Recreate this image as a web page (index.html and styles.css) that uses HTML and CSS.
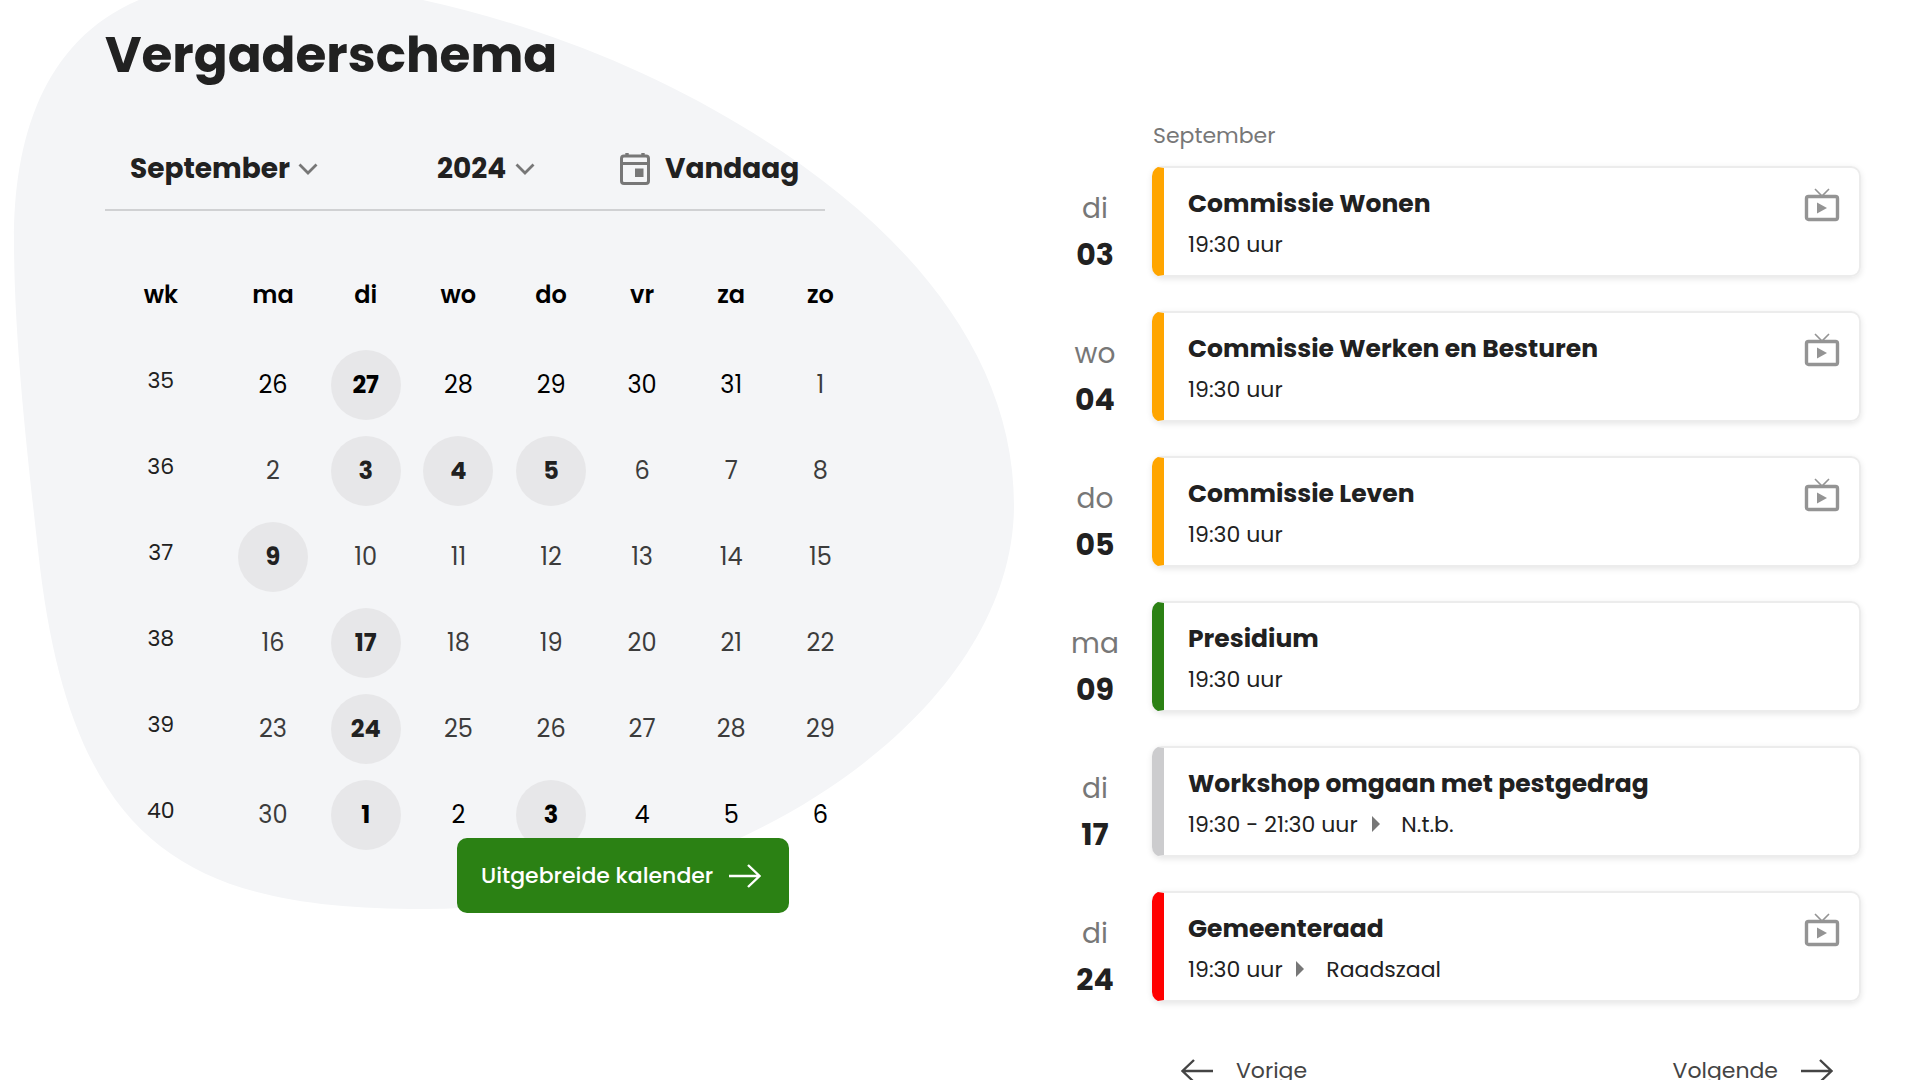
FILE: index.html
```html
<!DOCTYPE html>
<html lang="nl">
<head>
    <meta charset="UTF-8">
    <meta name="viewport" content="width=device-width, initial-scale=1.0">
    <title>Vergaderschema</title>
    <link rel="stylesheet" href="styles.css">
</head>
<body>
    <!-- shared icons -->
    <svg class="icon-defs" aria-hidden="true">
        <symbol id="icon-chevron" viewBox="0 0 20 12">
            <path d="M1.500 1.500l8.500 8.500 8.500-8.500" fill="none" stroke="currentColor" stroke-width="2.8"/>
        </symbol>
        <symbol id="icon-arrow" viewBox="0 0 32 24">
            <path d="M0 12h30M19 1l11.500 11L19 23" fill="none" stroke="currentColor" stroke-width="2.4"/>
        </symbol>
        <symbol id="icon-tv" viewBox="0 0 36 34">
            <rect x="2.500" y="8.500" width="31" height="23" rx="2" fill="none" stroke="currentColor" stroke-width="3.400"/>
            <path d="M11 1l7 7 7-7" fill="none" stroke="currentColor" stroke-width="1.600"/>
            <path d="M13 14.500l10 5.500-10 5.500z" fill="currentColor"/>
        </symbol>
        <symbol id="icon-play" viewBox="0 0 8 16">
            <path d="M0 0l8 8-8 8z" fill="currentColor"/>
        </symbol>
    </svg>

    <main class="page">
        <section class="calendar">
            <svg class="blob" viewBox="0 0 1020 910" aria-hidden="true">
                <path d="M14 240C14 112 60 -20 250 -20C400 -20 590 34 740 125C900 220 1014 350 1014 505C1014 720 720 909 423 909C190 909 70 850 38 550C28 460 14 340 14 240z"/>
            </svg>

            <h1>Vergaderschema</h1>

            <div class="toolbar">
                <label class="picker">
                    <select aria-label="Maand">
                        <option>September</option>
                    </select>
                    <svg class="chevron"><use href="#icon-chevron"/></svg>
                </label>
                <label class="picker">
                    <select aria-label="Jaar">
                        <option>2024</option>
                    </select>
                    <svg class="chevron"><use href="#icon-chevron"/></svg>
                </label>
                <button type="button" class="today">
                    <svg class="today-icon" viewBox="0 0 30 34" aria-hidden="true">
                        <rect x="1.500" y="4" width="27" height="27.500" rx="2.500" fill="none" stroke="currentColor" stroke-width="3"/>
                        <path d="M7 1v3M23 1v3" fill="none" stroke="currentColor" stroke-width="3.400"/>
                        <path d="M2 11.500h26" stroke="currentColor" stroke-width="3"/>
                        <path d="M15 16.500h8.500v8.500h-8.500z" fill="currentColor"/>
                    </svg>
                    Vandaag
                </button>
            </div>

            <table class="month">
                <thead>
                    <tr><th class="week">wk</th><th class="day">ma</th><th class="day">di</th><th class="day">wo</th><th class="day">do</th><th>vr</th><th>za</th><th>zo</th></tr>
                </thead>
                <tbody>
                    <tr><td class="week">35</td><td class="other">26</td><td class="other"><a href="#">27</a></td><td class="other">28</td><td class="other">29</td><td class="other">30</td><td class="other">31</td><td>1</td></tr>
                    <tr><td class="week">36</td><td>2</td><td><a href="#di-03">3</a></td><td><a href="#wo-04">4</a></td><td><a href="#do-05">5</a></td><td>6</td><td>7</td><td>8</td></tr>
                    <tr><td class="week">37</td><td><a href="#ma-09">9</a></td><td>10</td><td>11</td><td>12</td><td>13</td><td>14</td><td>15</td></tr>
                    <tr><td class="week">38</td><td>16</td><td><a href="#di-17">17</a></td><td>18</td><td>19</td><td>20</td><td>21</td><td>22</td></tr>
                    <tr><td class="week">39</td><td>23</td><td><a href="#di-24">24</a></td><td>25</td><td>26</td><td>27</td><td>28</td><td>29</td></tr>
                    <tr><td class="week">40</td><td>30</td><td class="other"><a href="#">1</a></td><td class="other">2</td><td class="other"><a href="#">3</a></td><td class="other">4</td><td class="other">5</td><td class="other">6</td></tr>
                </tbody>
            </table>

            <a class="full-calendar" href="#">
                Uitgebreide kalender
                <svg class="arrow"><use href="#icon-arrow"/></svg>
            </a>
        </section>

        <section class="agenda">
            <h2>September</h2>

            <ul class="meetings">
                <li id="di-03">
                    <div class="date"><span>di</span><strong>03</strong></div>
                    <article class="card commissie">
                        <div>
                            <h3><a href="#">Commissie Wonen</a></h3>
                            <p>19:30 uur</p>
                        </div>
                        <svg class="tv"><use href="#icon-tv"/></svg>
                    </article>
                </li>
                <li id="wo-04">
                    <div class="date"><span>wo</span><strong>04</strong></div>
                    <article class="card commissie">
                        <div>
                            <h3><a href="#">Commissie Werken en Besturen</a></h3>
                            <p>19:30 uur</p>
                        </div>
                        <svg class="tv"><use href="#icon-tv"/></svg>
                    </article>
                </li>
                <li id="do-05">
                    <div class="date"><span>do</span><strong>05</strong></div>
                    <article class="card commissie">
                        <div>
                            <h3><a href="#">Commissie Leven</a></h3>
                            <p>19:30 uur</p>
                        </div>
                        <svg class="tv"><use href="#icon-tv"/></svg>
                    </article>
                </li>
                <li id="ma-09">
                    <div class="date"><span>ma</span><strong>09</strong></div>
                    <article class="card presidium">
                        <div>
                            <h3><a href="#">Presidium</a></h3>
                            <p>19:30 uur</p>
                        </div>
                    </article>
                </li>
                <li id="di-17">
                    <div class="date"><span>di</span><strong>17</strong></div>
                    <article class="card workshop">
                        <div>
                            <h3><a href="#">Workshop omgaan met pestgedrag</a></h3>
                            <p>19:30 - 21:30 uur <svg class="play"><use href="#icon-play"/></svg> N.t.b.</p>
                        </div>
                    </article>
                </li>
                <li id="di-24">
                    <div class="date"><span>di</span><strong>24</strong></div>
                    <article class="card raad">
                        <div>
                            <h3><a href="#">Gemeenteraad</a></h3>
                            <p>19:30 uur <svg class="play"><use href="#icon-play"/></svg> Raadszaal</p>
                        </div>
                        <svg class="tv"><use href="#icon-tv"/></svg>
                    </article>
                </li>
            </ul>

            <nav class="pager">
                <a href="#"><svg class="arrow back"><use href="#icon-arrow"/></svg>Vorige</a>
                <a href="#">Volgende<svg class="arrow"><use href="#icon-arrow"/></svg></a>
            </nav>
        </section>
    </main>
</body>
</html>
```

FILE: styles.css
```css
* {
    box-sizing: border-box;
}

body {
    margin: 0;
    font-family: Poppins, Inter, sans-serif;
    font-size: 22px;
    line-height: 32px;
    color: #212121;
    background-color: #fff;
}

h1, h2, h3, p, ul {
    margin: 0;
    padding: 0;
}

a {
    color: inherit;
    text-decoration: none;
}

.icon-defs {
    display: none;
}

.page {
    display: grid;
    grid-template-columns: 760fr 809fr;
    gap: 187px;
    padding: 0 59px 0 105px;
}

/* Calendar */
.calendar {
    position: relative;
    z-index: 0;
    padding-top: 25px;
}

.blob {
    position: absolute;
    top: 0;
    left: -105px;
    z-index: -1;
    width: 1020px;
    height: 910px;
    fill: #f4f5f7;
}

h1 {
    font-size: 50px;
    line-height: 60px;
}

.toolbar {
    display: grid;
    grid-template-columns: 307fr 183fr 180fr;
    align-items: center;
    height: 86px;
    margin: 40px 40px 35px 0;
    padding: 3px 25px 0;
    border-bottom: 2px solid #d0d1d3;
}

.picker {
    display: flex;
    align-items: center;
    gap: 8px;
}

.picker select,
.today {
    padding: 0;
    border: 0;
    background: none;
    appearance: none;
    font: inherit;
    font-size: 28px;
    font-weight: 700;
    color: #212121;
    cursor: pointer;
}

.chevron {
    width: 20px;
    height: 12px;
    color: #777;
}

.today {
    display: flex;
    align-items: center;
    gap: 15px;
}

.today-icon {
    flex: none;
    width: 30px;
    height: 34px;
    color: #777;
}

.month {
    width: 100%;
    table-layout: fixed;
    border-collapse: collapse;
    font-size: 24px;
    text-align: center;
}

.month th {
    height: 96px;
    padding: 2px 0 0;
    font-weight: 600;
    color: #000;
}

.month td {
    height: 86px;
    padding: 0;
    color: #3c3c3c;
}

.month .other {
    color: #000;
}

.month .week {
    width: 16%;
    padding-right: 10px;
}

.month .day {
    width: 12.2%;
}

.month td.week {
    padding-bottom: 8px;
    font-size: 22px;
    color: #212121;
}

.month a {
    display: block;
    width: 70px;
    margin: 0 auto;
    border-radius: 50%;
    background-color: #e7e7e9;
    line-height: 70px;
    font-weight: 700;
    color: #212121;
}

.month .other a {
    color: #000;
}

.full-calendar {
    position: relative;
    display: flex;
    align-items: center;
    justify-content: space-between;
    width: 332px;
    height: 75px;
    margin: -20px 76px 0 auto;
    padding: 0 28px 0 24px;
    border-radius: 10px;
    background-color: #2b8114;
    font-weight: 500;
    color: #fff;
}

.arrow {
    width: 32px;
    height: 24px;
}

.back {
    transform: scaleX(-1);
}

/* Agenda */
.agenda {
    padding-top: 120px;
}

.agenda h2 {
    margin: 0 0 14px 101px;
    font-size: 22px;
    font-weight: 400;
    color: #777;
}

.meetings {
    display: grid;
    gap: 34px;
    list-style: none;
}

.meetings li {
    display: grid;
    grid-template-columns: 86px 1fr;
    gap: 14px;
}

.date {
    display: flex;
    flex-direction: column;
    gap: 14px;
    padding-top: 27px;
    font-size: 30px;
    text-align: center;
}

.date span {
    font-size: 28px;
    color: #777;
}

.card {
    display: flex;
    justify-content: space-between;
    min-height: 111px;
    padding: 20px 19px 12px 24px;
    border: 2px solid #ececec;
    border-left: 12px solid #ccc;
    border-radius: 10px;
    box-shadow: 0 2px 6px rgba(0, 0, 0, 0.1);
}

.commissie {
    border-left-color: #ffa500;
}

.presidium {
    border-left-color: #2b8114;
}

.workshop {
    border-left-color: #ccccce;
}

.raad {
    border-left-color: #f00;
}

.card h3 {
    margin-bottom: 9px;
    font-size: 25px;
    line-height: 32px;
}

.play {
    width: 8px;
    height: 16px;
    margin: 0 16px 0 8px;
    color: #777;
}

.tv {
    width: 36px;
    height: 34px;
    color: #949494;
}

.pager {
    display: flex;
    justify-content: space-between;
    margin-top: 53px;
    padding: 0 28px 0 129px;
    color: #444;
}

.pager a {
    display: flex;
    align-items: center;
    gap: 23px;
}
```
